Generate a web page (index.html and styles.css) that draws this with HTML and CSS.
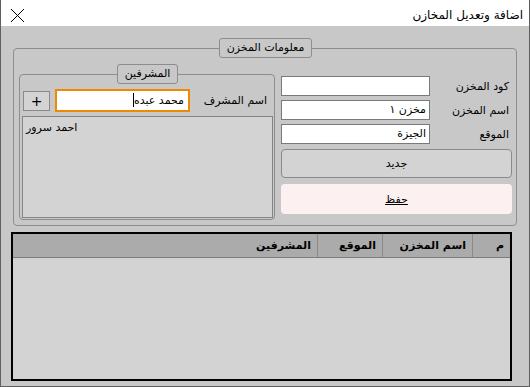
FILE: index.html
```html
<!DOCTYPE html>
<html lang="ar" dir="rtl">
<head>
    <meta charset="UTF-8">
    <meta name="viewport" content="width=device-width, initial-scale=1.0">
    <title>اضافة وتعديل المخازن</title>
    <link rel="stylesheet" href="styles.css">
</head>
<body>
    <div class="window">
        <!-- Title bar -->
        <div class="titlebar">
            <span class="title">اضافة وتعديل المخازن</span>
            <svg class="close" width="15" height="15" viewBox="0 0 15 15">
                <path d="M1 1 L14 14 M14 1 L1 14" stroke="#000" stroke-width="1" fill="none"/>
            </svg>
        </div>

        <div class="client">
            <!-- Store information group -->
            <fieldset class="group main-group">
                <legend class="group-title">معلومات المخزن</legend>
                <div class="main-body">
                    <div class="store-form">
                        <div class="fields">
                            <label class="field-label">كود المخزن</label>
                            <div class="textbox"></div>
                            <label class="field-label">اسم المخزن</label>
                            <div class="textbox">مخزن ١</div>
                            <label class="field-label">الموقع</label>
                            <div class="textbox">الجيزة</div>
                        </div>
                        <button class="btn btn-new">جديد</button>
                        <button class="btn btn-save"><u>حفظ</u></button>
                    </div>

                    <!-- Supervisors group -->
                    <fieldset class="group sub-group">
                        <legend class="group-title">المشرفين</legend>
                        <div class="sup-row">
                            <label class="sup-label">اسم المشرف</label>
                            <div class="textbox focused">محمد عبده<span class="caret"></span></div>
                            <button class="btn btn-add">+</button>
                        </div>
                        <div class="listbox">
                            <div class="list-item">احمد سرور</div>
                        </div>
                    </fieldset>
                </div>
            </fieldset>

            <!-- Stores grid -->
            <div class="grid">
                <div class="grid-head">
                    <div class="col col-num">م</div>
                    <div class="col col-name">اسم المخزن</div>
                    <div class="col col-place">الموقع</div>
                    <div class="col col-sup">المشرفين</div>
                </div>
            </div>
        </div>
    </div>
</body>
</html>
```

FILE: styles.css
```css
body {
    margin: 0;
    font-family: "DejaVu Sans", sans-serif;
    font-size: 11px;
    color: #000;
    direction: rtl;
    background: #c8c8c8;
}

.window {
    width: 530px;
    height: 387px;
    box-sizing: border-box;
    border: 1px solid #5f5f5f;
    border-top: none;
    background: #c8c8c8;
    display: flex;
    flex-direction: column;
}

.titlebar {
    height: 26px;
    box-sizing: border-box;
    padding: 4px 6px 0 9px;
    background: #ffffff;
    display: flex;
    align-items: center;
    justify-content: space-between;
}

.title {
    font-size: 12px;
}

.close {
    display: block;
}

.client {
    flex: 1;
}

/* group boxes */
.group {
    border: 1px solid #8d8d8d;
    border-radius: 4px;
    margin: 0;
    min-width: 0;
}

.group-title {
    margin: 0 auto;
    height: 20px;
    box-sizing: border-box;
    line-height: 18px;
    padding: 0 7px;
    border: 1px solid #8d8d8d;
    border-radius: 3px;
    background: #c8c8c8;
}

.main-group {
    margin: 12px 12px 0 12px;
    padding: 6px 4px 5px 5px;
}

.main-body {
    display: flex;
    gap: 6px;
    align-items: flex-start;
}

.store-form {
    width: 231px;
    margin-top: 12px;
    display: flex;
    flex-direction: column;
}

.fields {
    display: grid;
    grid-template-columns: 1fr 149px;
    grid-auto-rows: 20px;
    row-gap: 4px;
    align-items: center;
}

.field-label {
    padding-right: 3px;
}

.textbox {
    height: 20px;
    box-sizing: border-box;
    border: 1px solid #7a7a7a;
    background: #ffffff;
    padding: 0 3px;
    line-height: 18px;
    white-space: nowrap;
    overflow: hidden;
}

.btn {
    font-family: inherit;
    font-size: 11px;
    color: #000;
    border-radius: 4px;
    padding: 0;
    cursor: pointer;
}

.btn-new {
    height: 29px;
    margin-top: 5px;
    border: 1px solid #8a8a8a;
    background: #d3d3d3;
}

.btn-save {
    height: 30px;
    margin-top: 6px;
    border: none;
    background: #fdf0f0;
}

.sub-group {
    width: 256px;
    box-sizing: border-box;
    padding: 5px 1px 1px 2px;
}

.sup-row {
    height: 23px;
    display: flex;
    align-items: center;
}

.sup-label {
    flex: 1;
    padding-right: 6px;
}

.textbox.focused {
    width: 135px;
    height: 23px;
    border: 2px solid #ed8b00;
    box-shadow: inset 0 0 0 1px #ffffff;
    line-height: 19px;
    padding: 0 4px;
}

.caret {
    display: inline-block;
    width: 1px;
    height: 14px;
    background: #000;
    vertical-align: -3px;
}

.btn-add {
    width: 27px;
    height: 20px;
    margin: 0 5px 0 1px;
    border: 1px solid #8a8a8a;
    border-radius: 0;
    background: #d3d3d3;
    font-size: 14px;
    line-height: 16px;
}

.listbox {
    height: 102px;
    margin-top: 4px;
    box-sizing: border-box;
    border: 1px solid #858585;
    background: #d3d3d3;
    text-align: left;
    padding: 4px 3px;
}

/* stores grid */
.grid {
    margin: 6px 17px 0 10px;
    height: 149px;
    box-sizing: border-box;
    border: 2px solid #000;
    background: #d3d3d3;
}

.grid-head {
    height: 24px;
    box-sizing: border-box;
    display: flex;
    background: #ababab;
    border-bottom: 1px solid #7d7d7d;
}

.col {
    box-sizing: border-box;
    padding-right: 6px;
    line-height: 23px;
    font-weight: bold;
    border-left: 1px solid #8a8a8a;
}

.col-num { width: 38px; }
.col-name { width: 90px; }
.col-place { width: 65px; }
.col-sup { flex: 1; border-left: none; }
```
